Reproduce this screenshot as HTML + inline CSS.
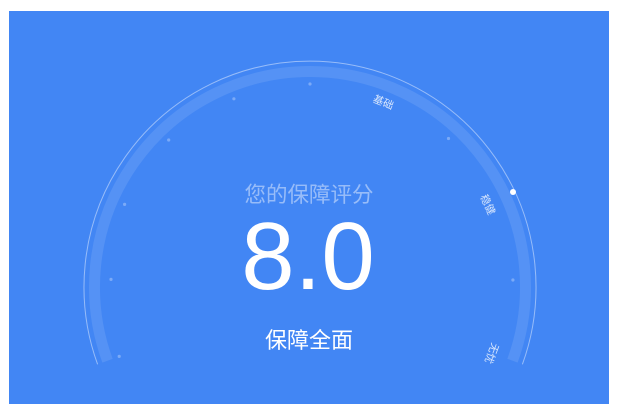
<!DOCTYPE html>
<html><head><meta charset="utf-8"><style>
html,body{margin:0;padding:0;width:621px;height:404px;background:#fff;overflow:hidden}
#p{position:absolute;left:9px;top:11px;width:600px;height:393px;background:#4286f4}
svg{position:absolute;left:0;top:0}
</style></head><body>
<div id="p"></div>
<svg width="621" height="404" viewBox="0 0 621 404" font-family="Liberation Sans, Noto Sans CJK SC, sans-serif">
<path d="M97.6 364.3 A226 226 0 1 1 522.4 364.3" fill="none" stroke="rgba(255,255,255,0.45)" stroke-width="1"/>
<path d="M107.5 360.7 A215.5 215.5 0 1 1 512.5 360.7" fill="none" stroke="rgba(255,255,255,0.1)" stroke-width="11"/>
<g fill="rgba(255,255,255,0.3)">
<circle cx="119.2" cy="356.4" r="1.6"/>
<circle cx="111" cy="279.4" r="1.6"/>
<circle cx="124.6" cy="204.4" r="1.6"/>
<circle cx="168.7" cy="140" r="1.6"/>
<circle cx="233.9" cy="98.8" r="1.6"/>
<circle cx="310" cy="84" r="1.6"/>
<circle cx="448.5" cy="138.5" r="1.6"/>
<circle cx="512.9" cy="280" r="1.6"/>
</g>
<circle cx="513" cy="192" r="3" fill="#fff"/>
<g fill="rgba(255,255,255,0.8)" font-size="10.5">
<text x="383" y="103" text-anchor="middle" dominant-baseline="middle" transform="rotate(22 383 103)">基础</text>
<text x="487" y="205" text-anchor="middle" dominant-baseline="middle" transform="rotate(65 487 205)">稳健</text>
<text x="491" y="353" text-anchor="middle" dominant-baseline="middle" transform="rotate(111 491 353)">无忧</text>
</g>
<text x="309" y="202" text-anchor="middle" font-size="21.5" fill="rgba(255,255,255,0.45)">您的保障评分</text>
<text x="308" y="289" text-anchor="middle" font-size="96" fill="#fff">8.0</text>
<text x="309" y="348" text-anchor="middle" font-size="22" fill="#fff">保障全面</text>
</svg>
</body></html>
